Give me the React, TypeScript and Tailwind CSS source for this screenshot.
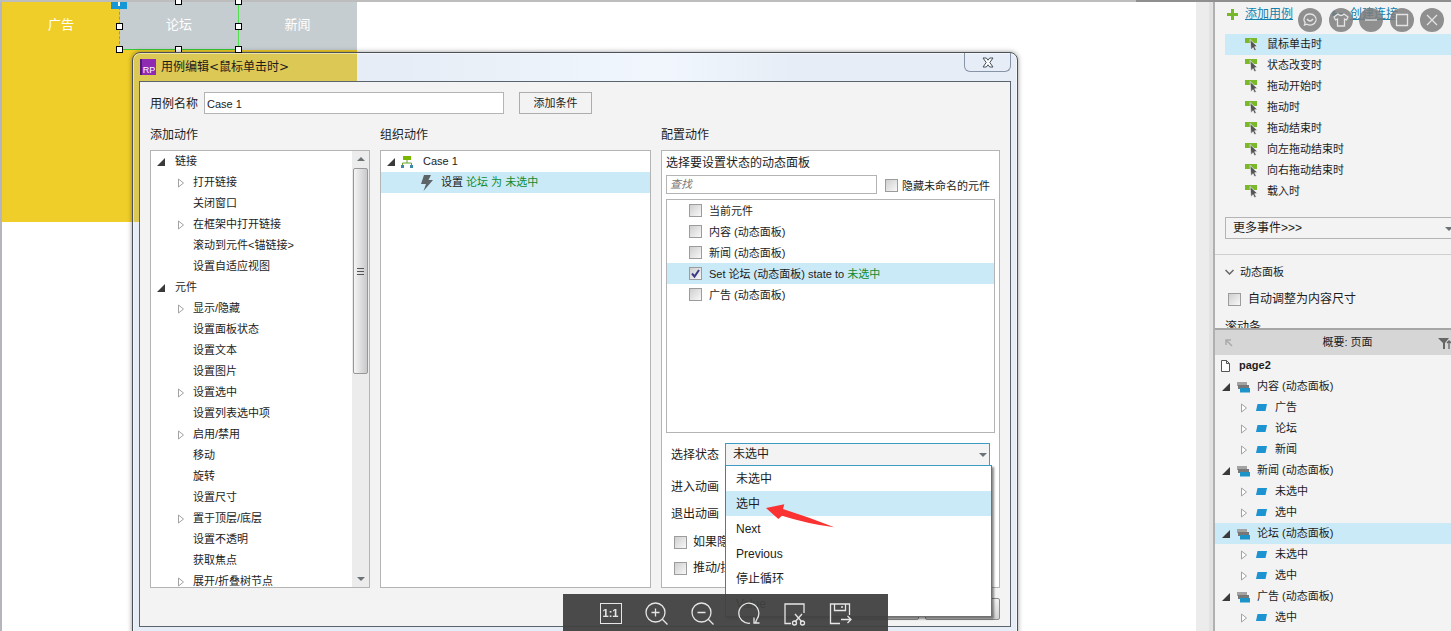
import React from 'react';

type ActionRow = { label: string; level: 0 | 1; arrow?: boolean };

const actions: ActionRow[] = [
    { label: "链接", level: 0 },
    { label: "打开链接", level: 1, arrow: true },
    { label: "关闭窗口", level: 1 },
    { label: "在框架中打开链接", level: 1, arrow: true },
    { label: "滚动到元件<锚链接>", level: 1 },
    { label: "设置自适应视图", level: 1 },
    { label: "元件", level: 0 },
    { label: "显示/隐藏", level: 1, arrow: true },
    { label: "设置面板状态", level: 1 },
    { label: "设置文本", level: 1 },
    { label: "设置图片", level: 1 },
    { label: "设置选中", level: 1, arrow: true },
    { label: "设置列表选中项", level: 1 },
    { label: "启用/禁用", level: 1, arrow: true },
    { label: "移动", level: 1 },
    { label: "旋转", level: 1 },
    { label: "设置尺寸", level: 1 },
    { label: "置于顶层/底层", level: 1, arrow: true },
    { label: "设置不透明", level: 1 },
    { label: "获取焦点", level: 1 },
    { label: "展开/折叠树节点", level: 1, arrow: true }
];

const panels = [
    { id: "current", label: "当前元件" },
    { id: "content", label: "内容 (动态面板)" },
    { id: "news", label: "新闻 (动态面板)" },
    { id: "forum", label: "Set 论坛 (动态面板) state to ", state: "未选中" },
    { id: "ads", label: "广告 (动态面板)" }
];

const states = ["未选中", "选中", "Next", "Previous", "停止循环", "Value"];

const events = ["鼠标单击时", "状态改变时", "拖动开始时", "拖动时", "拖动结束时", "向左拖动结束时", "向右拖动结束时", "载入时"];

const outline = [
    { label: "内容 (动态面板)", children: ["广告", "论坛", "新闻"] },
    { label: "新闻 (动态面板)", children: ["未选中", "选中"] },
    { label: "论坛 (动态面板)", children: ["未选中", "选中"], selected: true },
    { label: "广告 (动态面板)", children: ["选中"] }
];

const OpenArrow = () => (
    <svg className="w-2 h-2 shrink-0" viewBox="0 0 8 8"><path d="M8 0v8H0z" fill="#3a3a3a" /></svg>
);

const ClosedArrow = () => (
    <svg className="w-2 h-2.5 shrink-0" viewBox="0 0 8 10"><path d="M1.500 1v8L6.500 5z" fill="#fff" stroke="#a2a2a2" /></svg>
);

const DownArrow = () => (
    <svg className="w-2 h-1 shrink-0" viewBox="0 0 8 4"><path d="M0 0h8L4 4z" fill="#6b7276" /></svg>
);

const EventIcon = () => (
    <svg className="w-[14px] h-[14px] shrink-0" viewBox="0 0 14 14">
        <path d="M0 0h12v5H0z" fill="#7ab929" />
        <path d="M5 1.500l7.500 7-2.800.3 1.600 3-1.800.9-1.500-3L6 12z" fill="#555" stroke="#f3f3f3" strokeWidth=".7" />
    </svg>
);

const PanelIcon = () => (
    <svg className="w-[13px] h-3 shrink-0" viewBox="0 0 13 12">
        <path d="M0 1h10v4H0z" fill="#a3a3a3" />
        <path d="M1 4h11v4H1z" fill="#777" />
        <path d="M3 7h10v4.500H3z" fill="#1c94c8" />
    </svg>
);

const StateIcon = () => (
    <svg className="w-[11px] h-[7px] shrink-0" viewBox="0 0 11 7"><path d="M1.500 0H11L9.500 7H0z" fill="#1c94d2" /></svg>
);

const Tick: React.FC<{ id: string; checked?: boolean }> = ({ id, checked }) => (
    <span className="relative w-[13px] h-[13px] shrink-0">
        <input
            id={id}
            type="checkbox"
            defaultChecked={checked}
            className="peer block w-[13px] h-[13px] appearance-none border border-[#9a9c9e] bg-linear-to-br from-[#cfcfcf] to-[#f8f8f8]"
        />
        <svg className="absolute inset-0 hidden peer-checked:block pointer-events-none" viewBox="0 0 13 13">
            <path d="M3 6.500l2.500 3L10 3" fill="none" stroke="#3b3a86" strokeWidth="2" />
        </svg>
    </span>
);

const Handle: React.FC<{ className: string }> = ({ className }) => (
    <span className={`absolute w-[7px] h-[7px] border border-black bg-white ${className}`}></span>
);

const Canvas = () => (
    <div className="w-[355px] h-[220px] bg-[#f0ce29]">
        <div className="grid grid-cols-[118px_118px_119px] h-12 text-[13px] leading-5 text-white text-center">
            <div className="pt-[13px]">广告</div>
            <div className="relative pt-[13px] bg-[#c6cdd0] border-b border-[#35c935]">
                论坛
                <span className="absolute -left-px inset-y-0 border-l border-dashed border-[#35d935]"></span>
                <span className="absolute -right-px inset-y-0 border-l border-[#50e050]"></span>
                <span className="absolute -left-[9px] top-0 w-4 h-[7px] bg-[#1897d6] flex justify-center">
                    <span className="w-0.5 h-1 bg-white"></span>
                </span>
                <Handle className="-left-1 top-[21px]" />
                <Handle className="-left-1 -bottom-1" />
                <Handle className="left-[55px] -top-1" />
                <Handle className="left-[55px] -bottom-1" />
                <Handle className="-right-1 -top-1 z-10" />
                <Handle className="-right-1 top-[21px] z-10" />
                <Handle className="-right-1 -bottom-1 z-10" />
            </div>
            <div className="pt-[13px] bg-[#c6cdd0]">新闻</div>
        </div>
    </div>
);

const ActionList = () => (
    <div className="flex h-[438px] border border-[#b4b4b4] bg-white overflow-hidden">
        <ul className="flex-1 min-w-0">
            {actions.map((row) => (
                <li
                    key={row.label}
                    className={`flex items-center h-[21px] ${row.level === 0 ? "pl-1.5 gap-2.5" : "pl-[26px] gap-2"}`}
                >
                    {row.level === 0 ? <OpenArrow /> : row.arrow ? <ClosedArrow /> : <span className="w-2"></span>}
                    <span className="whitespace-nowrap">{row.label}</span>
                </li>
            ))}
        </ul>
        <div className="flex flex-col items-center w-[17px] bg-[#ececec]">
            <div className="flex items-center h-[17px] rotate-180"><DownArrow /></div>
            <div className="flex flex-col items-center justify-center gap-0.5 w-[15px] h-[206px] border border-[#979797] rounded-xs bg-linear-to-r from-[#f5f5f5] to-[#c9c9cb]">
                <span className="w-[7px] h-px bg-[#555]"></span>
                <span className="w-[7px] h-px bg-[#555]"></span>
                <span className="w-[7px] h-px bg-[#555]"></span>
            </div>
            <div className="flex items-center h-[17px] mt-auto"><DownArrow /></div>
        </div>
    </div>
);

const CaseTree = () => (
    <ul className="h-[438px] border border-[#b4b4b4] bg-white">
        <li className="flex items-center h-[21px] pl-1.5">
            <OpenArrow />
            <svg className="w-3 h-3 ml-[6px] mr-[10px]" viewBox="0 0 12 12">
                <path d="M2 0h8v4H2z" fill="#7ab800" />
                <path d="M6 4v3M1.500 10V7h9v3" fill="none" stroke="#69a32e" />
                <path d="M0 9h3v3H0zM9 9h3v3H9z" fill="#3d87a8" />
            </svg>
            Case 1
        </li>
        <li className="flex items-center h-[21px] pl-10 bg-[#cbeaf8]">
            <svg className="w-3 h-4 mr-2" viewBox="0 0 12 16">
                <path d="M3 0h7L7.500 5H12L2.500 16 5 9H0z" fill="#5c6468" />
            </svg>
            <span className="whitespace-pre">设置 <span className="text-[#118a2c]">论坛 为 未选中</span></span>
        </li>
    </ul>
);

const StateMenu = () => (
    <ul
        role="listbox"
        className="absolute left-0 top-[22px] z-10 w-[267px] border border-[#6f7173] border-t-[#3d9cc4] bg-white shadow-[2px_2px_2px_rgba(0,0,0,0.45)]"
    >
        {states.map((state) => (
            <li
                key={state}
                role="option"
                aria-selected={state === "选中"}
                className="relative h-[25px] pl-2.5 leading-[27px] aria-selected:bg-[#cbeaf8]"
            >
                {state}
                {state === "选中" && (
                    <svg className="absolute left-10 top-[13px] z-10 w-[70px] h-6" viewBox="0 0 210 72">
                        <path d="M0 12L55 1 51 15Q130 40 205 70 120 58 48 35L37 45z" fill="#fb3232" />
                    </svg>
                )}
            </li>
        ))}
    </ul>
);

const ConfigPanel = () => (
    <div className="h-[438px] border border-[#b4b4b4] bg-white px-1 pt-1 text-xs leading-4">
        <div>选择要设置状态的动态面板</div>
        <div className="flex items-center mt-1 text-[11px]">
            <input
                aria-label="查找"
                placeholder="查找"
                className="flex-1 min-w-0 h-[19px] border border-[#b4b4b4] px-[3px] pb-0.5 italic placeholder:text-[#777]"
            />
            <label htmlFor="hide-unnamed" className="flex items-center gap-1 ml-2 mr-[5px] pt-0.5">
                <Tick id="hide-unnamed" />
                隐藏未命名的元件
            </label>
        </div>
        <ul className="h-[234px] mt-[5px] border border-[#b4b4b4] text-[11px]">
            {panels.map((panel) => (
                <li key={panel.id} className={panel.state ? "bg-[#cbeaf8]" : ""}>
                    <label htmlFor={panel.id} className="flex items-center gap-[7px] h-[21px] pl-[22px] leading-[14px]">
                        <Tick id={panel.id} checked={!!panel.state} />
                        <span className="whitespace-pre">{panel.label}<span className="text-[#118a2c]">{panel.state}</span></span>
                    </label>
                </li>
            ))}
        </ul>
        <div className="relative flex items-center gap-1.5 mt-2.5 pl-1 pr-[5px]">
            <label htmlFor="panel-state" className="pl-px">选择状态</label>
            <div className="relative flex-1">
                <select
                    id="panel-state"
                    className="block w-full h-[23px] appearance-none border border-[#3d9cc4] bg-[#f3f3f3] pl-[7px] pb-0.5"
                >
                    <option>未选中</option>
                </select>
                <span className="absolute right-[3px] top-2.5 flex"><DownArrow /></span>
                <StateMenu />
            </div>
        </div>
        <div className="mt-[13px] pl-[5px]">进入动画</div>
        <div className="mt-[11px] pl-[5px]">退出动画</div>
        <label htmlFor="if-hidden" className="flex items-center gap-1.5 mt-[12px] pl-2">
            <Tick id="if-hidden" />
            如果隐藏
        </label>
        <label htmlFor="push-pull" className="flex items-center gap-1.5 mt-2.5 pl-2">
            <Tick id="push-pull" />
            推动/拉动
        </label>
    </div>
);

const CaseDialog = () => (
    <div
        role="dialog"
        aria-labelledby="case-dialog-title"
        className="absolute left-[132px] right-[195px] top-[50px] border border-[#4b5157] rounded-t-lg px-1.5 pb-1.5 bg-[#9bb7db]/25 shadow-[0_0_5px_rgba(0,0,0,0.4),inset_0_0_0_1px_rgba(255,255,255,0.5)]"
    >
        <div className="flex items-start h-7 pl-px bg-linear-to-r from-transparent from-30% via-[#f4f9ff]/80 via-60% to-transparent to-75%">
            <span className="flex items-end justify-center w-4 h-4 mt-1.5 border-l-2 border-[#4f1c73] bg-[#8f2bb3] text-[9px] leading-[10px] text-white">RP</span>
            <h1 id="case-dialog-title" className="ml-[5px] mt-1.5 font-['DejaVu_Sans','Noto_Sans_CJK_SC',sans-serif] text-xs leading-4">用例编辑&lt;鼠标单击时&gt;</h1>
            <button aria-label="关闭" className="ml-auto grid place-items-center w-[47px] h-[19px] border border-t-0 border-[#8794a6] rounded-b-md">
                <svg className="w-3 h-[11px]" viewBox="0 0 12 11">
                    <path d="M1 1h3.300L6 3.200 7.700 1H11L7.800 5.500 11 10H7.700L6 7.800 4.300 10H1l3.200-4.500z" fill="#fff" stroke="#454f5c" />
                </svg>
            </button>
        </div>
        <div className="border border-[#5b646c] bg-[#f3f3f3] px-2.5 pt-2.5 pb-1.5 text-[11px]">
            <div className="flex items-center text-xs">
                <label htmlFor="case-name" className="pt-0.5">用例名称</label>
                <input id="case-name" defaultValue="Case 1" className="w-[300px] h-[22px] ml-1.5 border border-[#b4b4b4] bg-white px-0.5 pt-0.5 text-[11px]" />
                <button className="w-[73px] h-[22px] ml-[15px] border border-[#adadad] text-[11px]">添加条件</button>
            </div>
            <div className="grid grid-cols-[220fr_271fr_339fr] gap-2.5">
                <section className="min-w-0">
                    <h2 className="pt-[13px] pb-[7px] text-xs leading-4">添加动作</h2>
                    <ActionList />
                </section>
                <section className="min-w-0">
                    <h2 className="pt-[13px] pb-[7px] text-xs leading-4">组织动作</h2>
                    <CaseTree />
                </section>
                <section className="min-w-0">
                    <h2 className="pt-[13px] pb-[7px] text-xs leading-4">配置动作</h2>
                    <ConfigPanel />
                </section>
            </div>
            <div className="flex justify-end gap-1.5 mt-2.5">
                <button aria-label="确定" className="w-[75px] h-[22px] border border-[#8c8c8c] rounded-xs bg-linear-to-b from-[#f2f2f2] to-[#d2d2d2]"></button>
                <button aria-label="取消" className="w-[75px] h-[22px] border border-[#8c8c8c] rounded-xs bg-linear-to-b from-[#f2f2f2] to-[#d2d2d2]"></button>
            </div>
        </div>
    </div>
);

const Inspector = () => (
    <aside className="flex flex-col w-[238px] shrink-0 border-l-2 border-[#b0b0b0] bg-[#f3f3f3] text-[11px]">
        <div className="h-[328px] shrink-0 border-b-2 border-[#a6a6a6] overflow-hidden">
            <div className="flex items-center h-6 mb-2 pl-3 text-xs text-[#1580ad] underline">
                <svg className="w-[11px] h-[11px] mr-[7px]" viewBox="0 0 11 11"><path d="M4 0h3v4h4v3H7v4H4V7H0V4h4z" fill="#76b82a" /></svg>
                <a href="#add-case">添加用例</a>
                <svg className="w-3 h-2 ml-[39px] mr-1.5" viewBox="0 0 12 8"><path d="M0 4h12M3 1L0 4l3 3" fill="none" stroke="#3d87a8" strokeWidth="2" /></svg>
                <a href="#connect">创建连接</a>
            </div>
            <ul className="pl-2.5">
                {events.map((name, idx) => (
                    <li key={name} className={`flex items-center gap-2 h-[21px] pl-5 ${idx === 0 ? "bg-[#cbeaf8]" : ""}`}>
                        <EventIcon />
                        {name}
                    </li>
                ))}
            </ul>
            <div className="relative mt-[15px] ml-2.5">
                <select aria-label="更多事件" className="block w-full h-[22px] appearance-none border border-r-0 border-[#b4b4b4] bg-[#f3f3f3] pl-[7px] text-xs">
                    <option>更多事件&gt;&gt;&gt;</option>
                </select>
                <span className="absolute -right-0.5 top-2.5 flex"><DownArrow /></span>
            </div>
            <div className="mt-[15px] border-t border-[#cfcfcf] pl-2.5">
                <h2 className="flex items-center gap-1.5 h-[34px]">
                    <svg className="w-[9px] h-1.5" viewBox="0 0 9 6"><path d="M.5 1l4 4 4-4" fill="none" stroke="#666" strokeWidth="1.500" /></svg>
                    动态面板
                </h2>
                <label htmlFor="auto-fit" className="flex items-center gap-[7px] h-5 pl-[3px] text-xs">
                    <Tick id="auto-fit" />
                    自动调整为内容尺寸
                </label>
                <div className="mt-2.5 text-xs leading-4">滚动条</div>
            </div>
        </div>
        <div className="flex items-center h-[25px] shrink-0 pl-2.5 bg-[#d6d6d6]">
            <svg className="w-2 h-2" viewBox="0 0 8 8"><path d="M1 6V1h5M1 1l6 6" fill="none" stroke="#aaa" strokeWidth="1.500" /></svg>
            <h2 className="flex-1 pl-6 text-center">概要: 页面</h2>
            <svg className="w-[13px] h-3" viewBox="0 0 13 12">
                <path d="M0 1h11L7 6v6H5V6z" fill="#666" />
                <path d="M11 12V4M9 6l2-2 2 2" fill="none" stroke="#666" strokeWidth="1.300" />
            </svg>
        </div>
        <div className="flex items-center h-[21px] pl-1.5 font-bold">
            <svg className="w-[9px] h-3 mr-[9px]" viewBox="0 0 9 12"><path d="M.5.5h5l3 3v8h-8zM5.500.5v3h3" fill="#fff" stroke="#555" /></svg>
            page2
        </div>
        <ul>
            {outline.map((node) => (
                <li key={node.label}>
                    <div className={`flex items-center h-[21px] pl-[7px] gap-[7px] ${node.selected ? "bg-[#cbeaf8]" : ""}`}>
                        <OpenArrow />
                        <PanelIcon />
                        {node.label}
                    </div>
                    <ul>
                        {node.children.map((child) => (
                            <li key={child} className="flex items-center gap-2 h-[21px] pl-[25px]">
                                <ClosedArrow />
                                <StateIcon />
                                {child}
                            </li>
                        ))}
                    </ul>
                </li>
            ))}
        </ul>
    </aside>
);

const controls = [
    { name: "反馈", icon: <><path d="M12 6a6 5.500 0 1 1-3 10.200L6.500 17l.6-2.300A5.500 5.500 0 0 1 12 6z" /><path d="M9 11q3 4 6 0" /></> },
    { name: "换肤", icon: <path d="M9 6l-4 3 1.500 3 2-1v7h7v-7l2 1L19 9l-4-3q-3 3-6 0z" /> },
    { name: "最小化", icon: <path d="M6 12h12" /> },
    { name: "最大化", icon: <path d="M6.500 6.500h11v11h-11z" /> },
    { name: "关闭窗口", icon: <path d="M7 7l10 10M17 7L7 17" /> }
];

const WindowControls = () => (
    <div className="fixed right-[7px] top-2 flex justify-between w-[146px]">
        {controls.map((item) => (
            <button key={item.name} aria-label={item.name} className="w-6 h-6 rounded-full bg-[#7c7c7c]/85">
                <svg viewBox="0 0 24 24" fill="none" stroke="#e4e4e4" strokeWidth="1.300">{item.icon}</svg>
            </button>
        ))}
    </div>
);

const tools = [
    { name: "放大", icon: <><circle cx="10.500" cy="10.500" r="9.500" /><path d="M6.500 10.500h8M10.500 6.500v8M17.300 17.300L22.500 22.500" /></> },
    { name: "缩小", icon: <><circle cx="10.500" cy="10.500" r="9.500" /><path d="M6.500 10.500h8M17.300 17.300L22.500 22.500" /></> },
    { name: "旋转", icon: <path d="M13 21.200A10 10 0 1 1 20 17L18.500 20.500M17 15.500v5.500h5.500" /> },
    { name: "裁剪", icon: <><path d="M8 21.500H2V2h19v9M12 12l7 8M19 12l-7 8" /><circle cx="11.500" cy="21" r="2" /><circle cx="19.500" cy="21" r="2" /></> },
    { name: "保存", icon: <><path d="M11 21.500H1.500V2h19v11M5.500 2v6.500h11V2M12 5h2M12 17.500h10M18.500 14l3.500 3.500L18.500 21" /></> }
];

const ImageToolbar = () => (
    <div className="fixed inset-x-0 bottom-0 z-20 flex justify-center">
        <div className="flex items-center justify-center w-[325px] h-[37px] pt-0.5 bg-[#404040]/95 text-[#e6e6e6]">
            <button className="w-[46px] grid place-items-center">
                <span className="w-[22px] h-[21px] border border-[#e6e6e6] text-[11px] leading-[19px] font-bold">1:1</span>
            </button>
            {tools.map((tool) => (
                <button key={tool.name} aria-label={tool.name} className="w-[46px] grid place-items-center">
                    <svg className="w-6 h-6" viewBox="0 0 24 24" fill="none" stroke="currentColor" strokeWidth="1.300">{tool.icon}</svg>
                </button>
            ))}
        </div>
    </div>
);

export default function App() {
    return (
        <div className="flex flex-col h-screen overflow-hidden bg-white text-[#1c1c1c] font-['Liberation_Sans','Noto_Sans_CJK_SC',sans-serif]">
            <div className="flex h-0.5 shrink-0 bg-[#bdbdbd]">
                <div className="ml-auto w-[315px] bg-[#8f8f8f]"></div>
            </div>
            <div className="flex flex-1 min-h-0">
                <main className="relative flex flex-1 min-w-0">
                    <div className="flex-1 border-l-2 border-[#b5b5bb]">
                        <Canvas />
                    </div>
                    <div className="w-[17px] bg-[#ececec] border-r-4 border-[#e2e2e2]"></div>
                    <CaseDialog />
                </main>
                <Inspector />
            </div>
            <WindowControls />
            <ImageToolbar />
        </div>
    );
}
